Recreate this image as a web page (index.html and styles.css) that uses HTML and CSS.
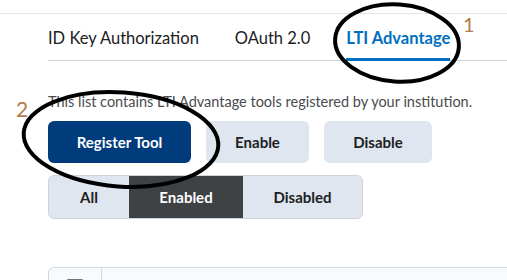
FILE: index.html
```html
<!DOCTYPE html>
<html>
<head>
<meta charset="utf-8">
<link rel="stylesheet" href="styles.css">
</head>
<body>
<div class="topline"></div>
<main class="content">
  <nav class="tabs">
    <span class="tab">ID Key Authorization</span>
    <span class="tab">OAuth 2.0</span>
    <span class="tab active">LTI Advantage</span>
  </nav>
  <p class="desc">This list contains LTI Advantage tools registered by your institution.</p>
  <div class="actions">
    <button class="btn primary reg">Register Tool</button>
    <button class="btn enable">Enable</button>
    <button class="btn disable">Disable</button>
  </div>
  <div class="segments">
    <span class="seg all">All</span>
    <span class="seg on">Enabled</span>
    <span class="seg dis">Disabled</span>
  </div>
  <div class="table">
    <div class="cell-check"><span class="checkbox"></span></div>
    <div class="cell-rest"></div>
  </div>
</main>
<svg class="annot" width="507" height="280" viewBox="0 0 507 280">
  <ellipse cx="397" cy="43" rx="62" ry="38.5" transform="rotate(4 397 43)" fill="none" stroke="#000" stroke-width="4"/>
  <ellipse cx="121" cy="139.5" rx="97.5" ry="47" transform="rotate(4 121 139.5)" fill="none" stroke="#000" stroke-width="4"/>
</svg>
<span class="num n1">1</span>
<span class="num n2">2</span>
</body>
</html>
```
FILE: styles.css
```css
* { box-sizing: border-box; }
html, body { margin: 0; padding: 0; background: #fff; }
body {
  width: 507px; height: 280px; overflow: hidden; position: relative;
  font-family: Lato, "Liberation Sans", sans-serif; color: #202122;
}
.topline { height: 1px; background: #e3e6e9; margin-top: 13px; }
.content { padding-left: 48px; }
.tabs {
  display: flex; gap: 36px; margin-top: 14px;
  border-bottom: 1px solid #cdd5dc; height: 33px;
}
.tab { font-size: 16.5px; line-height: 20px; color: #202122; white-space: nowrap; }
.tab.active { color: #006fbf; font-weight: 700; border-bottom: 3px solid #006fbf; height: 33px; margin-bottom: -1px; }
.desc { margin: 0; margin-top: 32px; font-size: 14.5px; line-height: 18px; color: #494c4e; white-space: nowrap; }
.actions { display: flex; gap: 15px; margin-top: 10px; }
.btn {
  font-family: inherit; font-size: 15px; font-weight: 700; height: 42px;
  border: none; border-radius: 6px; background: #dfe6ef; color: #202122; padding: 0;
}
.btn.primary { background: #003b7c; color: #fff; }
.reg { width: 143px; }
.enable { width: 103px; }
.disable { width: 108px; }
.segments {
  display: flex; margin-top: 12px; width: 315px; height: 44px;
  border: 1px solid #cdd5dc; border-radius: 6px; overflow: hidden; background: #dfe6ef;
}
.seg { display: flex; align-items: center; justify-content: center; font-size: 15px; font-weight: 700; color: #202122; }
.seg.all { width: 80px; }
.seg.on { width: 114px; background: #3f4244; color: #fff; }
.seg.dis { flex: 1; }
.table {
  display: flex; margin-top: 48px; height: 13px; overflow: hidden;
  border: 1px solid #d3d9e3; border-right: none; border-bottom: none; border-radius: 6px 0 0 0; background: #f9fafe;
}
.cell-check { width: 53px; border-right: 1px solid #d3d9e3; padding: 11px 0 0 17px; }
.checkbox { display: block; width: 18px; height: 18px; border: 2px solid #6e7477; border-radius: 3px; background: #fff; }
.cell-rest { flex: 1; }
.annot { position: absolute; left: 0; top: 0; pointer-events: none; }
.num { position: absolute; font-family: Lato, sans-serif; color: #b47a4c; font-weight: 400; }
.n1 { left: 463px; top: 12px; font-size: 20px; }
.n2 { left: 16px; top: 96px; font-size: 21px; }
```
